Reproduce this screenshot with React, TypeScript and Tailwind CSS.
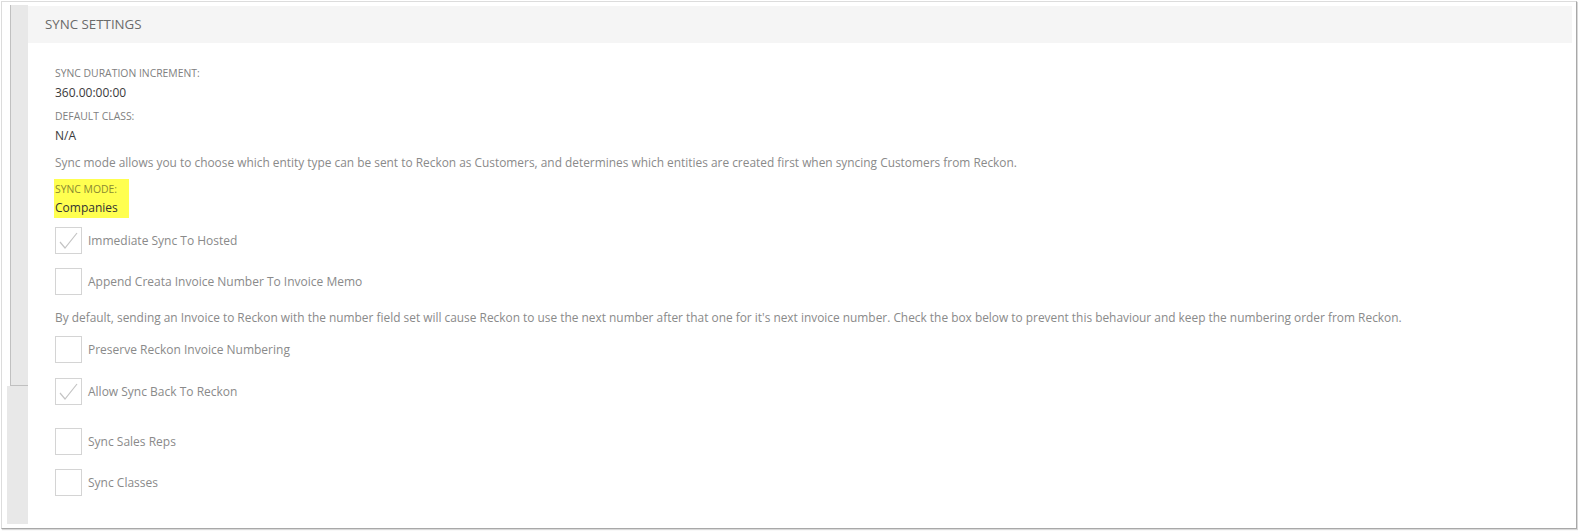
import React from 'react';

const font = { fontFamily: '"Open Sans", "Noto Sans", Arial, sans-serif' };

const Check: React.FC<{ checked?: boolean; label: string; className?: string }> = ({ checked, label, className }) => (
    <div className={`flex items-center ${className ?? ''}`}>
        <div className="w-[27px] h-[27px] border border-[#d4d4d4] bg-white shrink-0">
            {checked && (
                <svg viewBox="0 0 25 25" className="w-[25px] h-[25px]">
                    <polyline points="4,14 9,20 21,5" fill="none" stroke="#c4c4c4" strokeWidth="1.2" />
                </svg>
            )}
        </div>
        <span className="ml-[6px] text-[12px] leading-[16px] text-[#8a8a8a]">{label}</span>
    </div>
);

export default function App() {
    return (
        <div className="w-[1578px] h-[531px] bg-white pl-[1px] pt-[1px]" style={font}>
            <div className="w-[1576px] h-[528px] border-l border-t border-[#dcdcdc] border-r border-b border-r-[#a8a8a8] border-b-[#a8a8a8] shadow-[1px_1px_1px_rgba(0,0,0,0.15)] flex">
                {/* left rail */}
                <div className="w-[26px] shrink-0 flex flex-col pt-[3px] pb-[4px]">
                    <div className="h-[381px] pl-[8px] flex">
                        <div className="flex-1 border-l border-b border-[#c0c0c0] bg-[#e8e8e8]" />
                    </div>
                    <div className="flex-1 pl-[5px] flex">
                        <div className="flex-1 bg-[#e8e8e8]" />
                    </div>
                </div>

                <div className="flex-1 pt-[4px] pr-[4px]">
                    <div className="h-[37px] bg-[#f5f5f5] flex items-center pl-[17px] text-[13.3px] text-[#6a6a6a] uppercase">
                        Sync Settings
                    </div>

                    <div className="pl-[27px]">
                        <div className="mt-[22px] text-[10.4px] leading-[16px] text-[#808080] uppercase">Sync Duration Increment:</div>
                        <div className="mt-[4px] text-[12px] leading-[16px] text-[#3a3a3a]">360.00:00:00</div>
                        <div className="mt-[7px] text-[10.4px] leading-[16px] text-[#808080] uppercase">Default Class:</div>
                        <div className="mt-[4px] text-[12px] leading-[16px] text-[#3a3a3a]">N/A</div>
                        <div className="mt-[10px] text-[11.9px] leading-[16px] text-[#8a8a8a]">
                            Sync mode allows you to choose which entity type can be sent to Reckon as Customers, and determines which entities are created first when syncing Customers from Reckon.
                        </div>

                        <div className="mt-[9px] -ml-[1px] w-[75px] h-[39px] bg-[#ffff50] pl-[1px] pt-[2px]">
                            <div className="text-[10.4px] leading-[16px] text-[#8a8a30] uppercase">Sync Mode:</div>
                            <div className="mt-[3px] text-[12px] leading-[16px] text-[#333]">Companies</div>
                        </div>

                        <Check checked label="Immediate Sync To Hosted" className="mt-[9px]" />
                        <Check label="Append Creata Invoice Number To Invoice Memo" className="mt-[14px]" />

                        <div className="mt-[14px] text-[11.9px] leading-[16px] text-[#8a8a8a]">
                            By default, sending an Invoice to Reckon with the number field set will cause Reckon to use the next number after that one for it's next invoice number. Check the box below to prevent this behaviour and keep the numbering order from Reckon.
                        </div>

                        <Check label="Preserve Reckon Invoice Numbering" className="mt-[11px]" />
                        <Check checked label="Allow Sync Back To Reckon" className="mt-[15px]" />
                        <Check label="Sync Sales Reps" className="mt-[23px]" />
                        <Check label="Sync Classes" className="mt-[14px]" />
                    </div>
                </div>
            </div>
        </div>
    );
}
